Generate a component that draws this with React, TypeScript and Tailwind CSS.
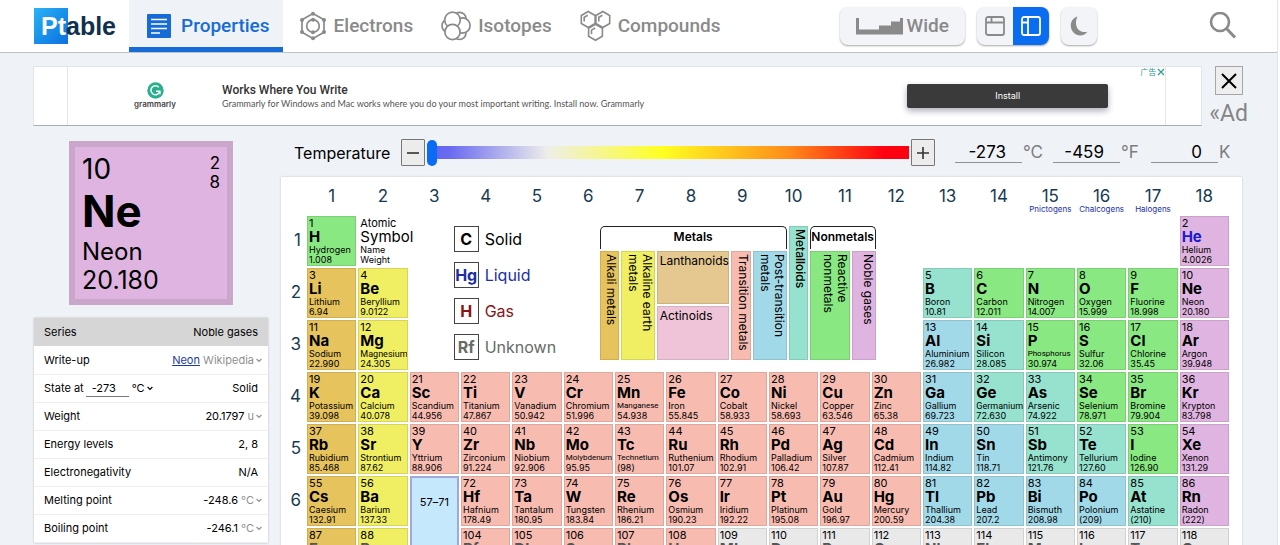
import { Fragment, type ReactNode } from 'react';

type Series = 'alkali' | 'alkaline' | 'transition' | 'post' | 'metalloid' | 'reactive' | 'noble' | 'unknown';

const fill: Record<Series, string> = {
  alkali: 'bg-[#e6c35c]',
  alkaline: 'bg-[#f0ee62]',
  transition: 'bg-[#f8bbb0]',
  post: 'bg-[#a2d9e8]',
  metalloid: 'bg-[#96e2cf]',
  reactive: 'bg-[#89e882]',
  noble: 'bg-[#e0b4e0]',
  unknown: 'bg-[#e9e9e9]',
};

const colStart = [
  '', 'col-start-2', 'col-start-3', 'col-start-4', 'col-start-5', 'col-start-6', 'col-start-7',
  'col-start-8', 'col-start-9', 'col-start-10', 'col-start-11', 'col-start-12', 'col-start-13',
  'col-start-14', 'col-start-15', 'col-start-16', 'col-start-17', 'col-start-18', 'col-start-19',
];

const rowStart = ['', 'row-start-2', 'row-start-3', 'row-start-4', 'row-start-5', 'row-start-6', 'row-start-7', 'row-start-8'];

type Entry = [number, string, string, string, Series];

// One array per period; each run starts at its group and continues rightwards.
const periods: { group: number; items: Entry[] }[][] = [
  [
    { group: 1, items: [[1, 'H', 'Hydrogen', '1.008', 'reactive']] },
    { group: 18, items: [[2, 'He', 'Helium', '4.0026', 'noble']] },
  ],
  [
    { group: 1, items: [[3, 'Li', 'Lithium', '6.94', 'alkali'], [4, 'Be', 'Beryllium', '9.0122', 'alkaline']] },
    {
      group: 13,
      items: [
        [5, 'B', 'Boron', '10.81', 'metalloid'],
        [6, 'C', 'Carbon', '12.011', 'reactive'],
        [7, 'N', 'Nitrogen', '14.007', 'reactive'],
        [8, 'O', 'Oxygen', '15.999', 'reactive'],
        [9, 'F', 'Fluorine', '18.998', 'reactive'],
        [10, 'Ne', 'Neon', '20.180', 'noble'],
      ],
    },
  ],
  [
    { group: 1, items: [[11, 'Na', 'Sodium', '22.990', 'alkali'], [12, 'Mg', 'Magnesium', '24.305', 'alkaline']] },
    {
      group: 13,
      items: [
        [13, 'Al', 'Aluminium', '26.982', 'post'],
        [14, 'Si', 'Silicon', '28.085', 'metalloid'],
        [15, 'P', 'Phosphorus', '30.974', 'reactive'],
        [16, 'S', 'Sulfur', '32.06', 'reactive'],
        [17, 'Cl', 'Chlorine', '35.45', 'reactive'],
        [18, 'Ar', 'Argon', '39.948', 'noble'],
      ],
    },
  ],
  [
    {
      group: 1,
      items: [
        [19, 'K', 'Potassium', '39.098', 'alkali'],
        [20, 'Ca', 'Calcium', '40.078', 'alkaline'],
        [21, 'Sc', 'Scandium', '44.956', 'transition'],
        [22, 'Ti', 'Titanium', '47.867', 'transition'],
        [23, 'V', 'Vanadium', '50.942', 'transition'],
        [24, 'Cr', 'Chromium', '51.996', 'transition'],
        [25, 'Mn', 'Manganese', '54.938', 'transition'],
        [26, 'Fe', 'Iron', '55.845', 'transition'],
        [27, 'Co', 'Cobalt', '58.933', 'transition'],
        [28, 'Ni', 'Nickel', '58.693', 'transition'],
        [29, 'Cu', 'Copper', '63.546', 'transition'],
        [30, 'Zn', 'Zinc', '65.38', 'transition'],
        [31, 'Ga', 'Gallium', '69.723', 'post'],
        [32, 'Ge', 'Germanium', '72.630', 'metalloid'],
        [33, 'As', 'Arsenic', '74.922', 'metalloid'],
        [34, 'Se', 'Selenium', '78.971', 'reactive'],
        [35, 'Br', 'Bromine', '79.904', 'reactive'],
        [36, 'Kr', 'Krypton', '83.798', 'noble'],
      ],
    },
  ],
  [
    {
      group: 1,
      items: [
        [37, 'Rb', 'Rubidium', '85.468', 'alkali'],
        [38, 'Sr', 'Strontium', '87.62', 'alkaline'],
        [39, 'Y', 'Yttrium', '88.906', 'transition'],
        [40, 'Zr', 'Zirconium', '91.224', 'transition'],
        [41, 'Nb', 'Niobium', '92.906', 'transition'],
        [42, 'Mo', 'Molybdenum', '95.95', 'transition'],
        [43, 'Tc', 'Technetium', '(98)', 'transition'],
        [44, 'Ru', 'Ruthenium', '101.07', 'transition'],
        [45, 'Rh', 'Rhodium', '102.91', 'transition'],
        [46, 'Pd', 'Palladium', '106.42', 'transition'],
        [47, 'Ag', 'Silver', '107.87', 'transition'],
        [48, 'Cd', 'Cadmium', '112.41', 'transition'],
        [49, 'In', 'Indium', '114.82', 'post'],
        [50, 'Sn', 'Tin', '118.71', 'post'],
        [51, 'Sb', 'Antimony', '121.76', 'metalloid'],
        [52, 'Te', 'Tellurium', '127.60', 'metalloid'],
        [53, 'I', 'Iodine', '126.90', 'reactive'],
        [54, 'Xe', 'Xenon', '131.29', 'noble'],
      ],
    },
  ],
  [
    { group: 1, items: [[55, 'Cs', 'Caesium', '132.91', 'alkali'], [56, 'Ba', 'Barium', '137.33', 'alkaline']] },
    {
      group: 4,
      items: [
        [72, 'Hf', 'Hafnium', '178.49', 'transition'],
        [73, 'Ta', 'Tantalum', '180.95', 'transition'],
        [74, 'W', 'Tungsten', '183.84', 'transition'],
        [75, 'Re', 'Rhenium', '186.21', 'transition'],
        [76, 'Os', 'Osmium', '190.23', 'transition'],
        [77, 'Ir', 'Iridium', '192.22', 'transition'],
        [78, 'Pt', 'Platinum', '195.08', 'transition'],
        [79, 'Au', 'Gold', '196.97', 'transition'],
        [80, 'Hg', 'Mercury', '200.59', 'transition'],
        [81, 'Tl', 'Thallium', '204.38', 'post'],
        [82, 'Pb', 'Lead', '207.2', 'post'],
        [83, 'Bi', 'Bismuth', '208.98', 'post'],
        [84, 'Po', 'Polonium', '(209)', 'post'],
        [85, 'At', 'Astatine', '(210)', 'metalloid'],
        [86, 'Rn', 'Radon', '(222)', 'noble'],
      ],
    },
  ],
  [
    { group: 1, items: [[87, 'Fr', 'Francium', '(223)', 'alkali'], [88, 'Ra', 'Radium', '(226)', 'alkaline']] },
    {
      group: 4,
      items: [
        [104, 'Rf', 'Rutherfordium', '(267)', 'transition'],
        [105, 'Db', 'Dubnium', '(268)', 'transition'],
        [106, 'Sg', 'Seaborgium', '(269)', 'transition'],
        [107, 'Bh', 'Bohrium', '(270)', 'transition'],
        [108, 'Hs', 'Hassium', '(277)', 'transition'],
        [109, 'Mt', 'Meitnerium', '(278)', 'unknown'],
        [110, 'Ds', 'Darmstadtium', '(281)', 'unknown'],
        [111, 'Rg', 'Roentgenium', '(282)', 'unknown'],
        [112, 'Cn', 'Copernicium', '(285)', 'unknown'],
        [113, 'Nh', 'Nihonium', '(286)', 'unknown'],
        [114, 'Fl', 'Flerovium', '(289)', 'unknown'],
        [115, 'Mc', 'Moscovium', '(290)', 'unknown'],
        [116, 'Lv', 'Livermorium', '(293)', 'unknown'],
        [117, 'Ts', 'Tennessine', '(294)', 'unknown'],
        [118, 'Og', 'Oganesson', '(294)', 'unknown'],
      ],
    },
  ],
];

const groupNames: Record<number, string> = { 15: 'Pnictogens', 16: 'Chalcogens', 17: 'Halogens' };

// Names too wide for a cell in the regular face are set in a narrower one.
const wideNames = new Set(['Magnesium', 'Germanium', 'Meitnerium', 'Moscovium']);
const widestNames = new Set([
  'Phosphorus', 'Manganese', 'Molybdenum', 'Technetium', 'Rutherfordium', 'Seaborgium', 'Darmstadtium',
  'Roentgenium', 'Copernicium', 'Livermorium', 'Tennessine', 'Oganesson',
]);

function nameStyle(name: string) {
  if (widestNames.has(name)) return "text-[8px] font-['Roboto']";
  if (wideNames.has(name)) return "text-[9px] font-['Roboto']";
  return 'text-[9px]';
}

function ElementCell({ entry, group, period }: { entry: Entry; group: number; period: number }) {
  const [number, symbol, name, weight, series] = entry;
  const tone = symbol === 'He' ? 'text-[#1a1ad0]' : period === 7 ? 'text-[#555]' : 'text-black';
  return (
    <a
      href={`#${symbol}`}
      className={`flex min-w-0 flex-col overflow-hidden border border-black/10 pl-px whitespace-nowrap ${fill[series]} ${colStart[group]} ${rowStart[period]}`}
    >
      <span className="text-[11px] leading-[12px]">{number}</span>
      <span className={`text-[15px] leading-[16px] font-bold ${tone}`}>{symbol}</span>
      <span className={`leading-[10px] ${nameStyle(name)}`}>{name}</span>
      <span className="text-[9px] leading-[9px]">{weight}</span>
    </a>
  );
}

function HexPath({ x, y }: { x: number; y: number }) {
  return <path d={`M${x} ${y - 8}l6.9 4v8l-6.9 4l-6.9-4v-8zM${x - 4} ${y + 2}v-4.200l3.600-2.100`} />;
}

function ElectronsIcon() {
  return (
    <svg width="28" height="30" viewBox="0 0 28 30" fill="none" stroke="currentColor" strokeWidth="1.7" aria-hidden="true">
      <path d="M14 2.5L25 8.8v12.4L14 27.5L3 21.2V8.8z" />
      <circle cx="14" cy="15" r="6.3" />
      <g fill="currentColor" stroke="none">
        <circle cx="14" cy="2.8" r="2" />
        <circle cx="25" cy="9" r="2" />
        <circle cx="25" cy="21" r="2" />
        <circle cx="14" cy="27.2" r="2" />
        <circle cx="3" cy="21" r="2" />
        <circle cx="3" cy="9" r="2" />
        <circle cx="14" cy="8.700" r="2" />
        <circle cx="14" cy="21.300" r="2" />
      </g>
    </svg>
  );
}

function IsotopesIcon() {
  return (
    <svg width="30" height="30" viewBox="0 0 30 30" stroke="currentColor" strokeWidth="1.7" fill="white" aria-hidden="true">
      <circle cx="18.5" cy="7.800" r="6.500" />
      <circle cx="18.5" cy="22" r="6.500" />
      <circle cx="8" cy="14.800" r="7" />
      <circle cx="21.500" cy="14.500" r="7.600" />
      <circle cx="11.500" cy="9" r="7.800" />
      <circle cx="11.500" cy="21" r="7.600" />
    </svg>
  );
}

function CompoundsIcon() {
  return (
    <svg width="31" height="32" viewBox="0 0 31 32" fill="none" stroke="currentColor" strokeWidth="1.6" aria-hidden="true">
      <HexPath x={8.2} y={9.5} />
      <HexPath x={22.8} y={9.5} />
      <HexPath x={15.5} y={22.3} />
    </svg>
  );
}

function PropertiesIcon() {
  return (
    <svg width="24" height="24" viewBox="0 0 24 24" aria-hidden="true">
      <rect width="24" height="24" rx="1" fill="currentColor" />
      <path d="M4 5.5h16M4 10h16M4 14.500h16M4 19h9" stroke="white" strokeWidth="1.4" />
    </svg>
  );
}

function Tab({ icon, label, active = false }: { icon: ReactNode; label: string; active?: boolean }) {
  return (
    <a
      href={`#${label}`}
      className={`flex items-center border-b-[5px] pt-[5px] font-['Roboto'] text-[19px] font-medium ${
        active ? 'gap-[10px] border-[#176bd6] bg-[#eff3f8] pr-[13px] pl-[18px] text-[#176bd6]' : 'gap-[7px] border-transparent text-[#8a8a8a]'
      }`}
    >
      {icon}
      <span>{label}</span>
    </a>
  );
}

function Header() {
  return (
    <header className="flex h-[53px] shrink-0 items-stretch border-b border-[#bcc2c8] bg-white pr-10 pl-[34px]">
      <a href="#home" className="my-[7px] mr-[13px] flex items-center font-['Liberation_Sans'] text-[25px] leading-none font-bold">
        <span className="flex h-9 items-center bg-linear-to-br from-[#2bb2f4] to-[#0f6fe0] pr-0.5 pl-[7px] text-white">Pt</span>
        <span className="-ml-0.5 text-[#10304d]">able</span>
      </a>
      <nav className="flex items-stretch gap-7">
        <div className="-mr-3 flex">
          <Tab active icon={<PropertiesIcon />} label="Properties" />
        </div>
        <Tab icon={<ElectronsIcon />} label="Electrons" />
        <Tab icon={<IsotopesIcon />} label="Isotopes" />
        <Tab icon={<CompoundsIcon />} label="Compounds" />
      </nav>
      <div className="my-[7px] mr-28 ml-auto flex items-stretch gap-3 text-[#8a8a8a]">
        <button className="flex items-center gap-1 rounded-lg bg-[#f2f4f8] px-4 font-['Roboto'] text-[19px] font-medium shadow-[0_1px_2px_rgba(0,0,0,0.35)]">
          <svg width="47" height="17" viewBox="0 0 47 17" fill="currentColor" aria-hidden="true">
            <path d="M0 0h3v11.500h20v-4h12v-4h9V0h3v16.500H0z" />
          </svg>
          Wide
        </button>
        <div className="flex overflow-hidden rounded-lg bg-[#f2f4f8] shadow-[0_1px_2px_rgba(0,0,0,0.35)]">
          <button aria-label="Top panel" className="flex w-9 items-center justify-center">
            <svg width="20" height="20" viewBox="0 0 20 20" fill="none" stroke="currentColor" strokeWidth="1.8" aria-hidden="true">
              <rect x="1" y="1" width="18" height="18" rx="2" />
              <path d="M1 6.500h18M6.500 1v5.500" />
            </svg>
          </button>
          <button aria-label="Side panel" className="flex w-9 items-center justify-center bg-[#0a6cf0] text-white">
            <svg width="20" height="20" viewBox="0 0 20 20" fill="none" stroke="currentColor" strokeWidth="1.8" aria-hidden="true">
              <rect x="1" y="1" width="18" height="18" rx="2" />
              <path d="M7 1v18M1 6.500h6" />
            </svg>
          </button>
        </div>
        <button aria-label="Dark mode" className="flex w-9 items-center justify-center rounded-lg bg-[#f2f4f8] shadow-[0_1px_2px_rgba(0,0,0,0.35)]">
          <svg width="18" height="20" viewBox="0 0 18 20" fill="currentColor" aria-hidden="true">
            <path d="M7.500 0.500C3.500 1.500 0.800 5.200 0.800 9.500c0 5.600 4.200 10 9.400 10c3 0 5.600-1.400 7.200-3.700C11 17.200 6.200 13.200 6 7.500C5.900 4.800 6.500 2.300 7.500 0.500z" />
          </svg>
        </button>
      </div>
      <button aria-label="Search" className="text-[#8a8a8a]">
        <svg width="28" height="28" viewBox="0 0 28 28" fill="none" stroke="currentColor" strokeWidth="2.6" aria-hidden="true">
          <circle cx="11" cy="10" r="9" />
          <path d="M17.500 16.500L26 25.500" strokeWidth="3" />
        </svg>
      </button>
    </header>
  );
}

function Advert() {
  return (
    <div className="mt-[13px] mr-[29px] ml-[33px] flex gap-[7px]">
      <div className="flex h-[60px] min-w-0 flex-1 border border-[#e2e5e8] border-b-[#a9adb2] bg-white pr-[35px] pl-[33px]">
        <div className="flex flex-1 border-x border-[#e6e6e6]">
          <div className="flex w-[154px] shrink-0 flex-col items-center justify-center pl-5">
            <svg width="17" height="17" viewBox="0 0 17 17" aria-hidden="true">
              <circle cx="8.500" cy="8.500" r="8.200" fill="#27b08b" />
              <path d="M11.800 5.200A4.500 4.500 0 1 0 12.600 10M9 9.300h3.900v3" fill="none" stroke="white" strokeWidth="1.500" />
            </svg>
            <span className="text-[8px] leading-[11px] font-semibold text-[#444]">grammarly</span>
          </div>
          <div className="flex flex-col justify-center">
            <strong className="font-['Roboto'] text-[12px] leading-[16px] font-medium text-[#333]">Works Where You Write</strong>
            <span className="font-['Lato'] text-[9px] leading-[12px] whitespace-nowrap text-[#555]">
              Grammarly for Windows and Mac works where you do your most important writing. Install now. Grammarly
            </span>
          </div>
          <div className="ml-auto flex items-start">
            <button className="mt-[17px] mr-8 h-6 w-[201px] rounded-[2px] bg-[#3a3a3a] text-[9px] text-white shadow-[0_3px_6px_rgba(60,50,90,0.4)]">
              Install
            </button>
            <div className="flex items-center font-['Noto_Sans_CJK_SC',sans-serif] text-[8px] leading-[10px] text-[#2f9c98]">
              广告
              <svg width="9" height="8" viewBox="0 0 9 8" stroke="currentColor" strokeWidth="1.200" aria-hidden="true">
                <path d="M2 1l6 6M8 1L2 7" />
              </svg>
            </div>
          </div>
        </div>
      </div>
      <div className="flex flex-col items-center">
        <button aria-label="Close advert" className="flex h-[29px] w-7 items-center justify-center border border-[#a6a6a6] bg-[#eee] text-black">
          <svg width="16" height="16" viewBox="0 0 16 16" stroke="currentColor" strokeWidth="2" aria-hidden="true">
            <path d="M1 1l14 14M15 1L1 15" />
          </svg>
        </button>
        <a href="#ad" className="mt-[5px] font-['Roboto'] text-[23px] leading-[28px] text-[#858585]">«Ad</a>
      </div>
    </div>
  );
}

function Chevron() {
  return (
    <svg className="ml-0.5 inline-block" width="6" height="5" viewBox="0 0 6 5" fill="none" stroke="currentColor" strokeWidth="1.200" aria-hidden="true">
      <path d="M0.600 1l2.400 2.400L5.400 1" />
    </svg>
  );
}

function PropertyRow({ label, unit, children }: { label: ReactNode; unit?: string; children: ReactNode }) {
  return (
    <tr className="h-7 border-b border-[#efefef]">
      <th scope="row" className="pl-[10px] text-left font-normal">{label}</th>
      <td className={`text-right ${unit ? 'pr-[6px]' : 'pr-[10px]'}`}>
        {children}
        {unit && <span className="text-[#8f8f8f]"> {unit}<Chevron /></span>}
      </td>
    </tr>
  );
}

function Sidebar() {
  return (
    <aside className="w-[234px] shrink-0">
      <div className="mx-auto flex h-[164px] w-[164px] justify-between border-[6px] border-[#caa6ca] bg-[#e0b4e0] px-[7px] pt-[7px]">
        <div className="flex flex-col">
          <span className="text-[28px] leading-[30px]">10</span>
          <span className="text-[44px] leading-[54px] font-bold">Ne</span>
          <span className="text-[24px] leading-[28px]">Neon</span>
          <span className="text-[25px] leading-[29px]">20.180</span>
        </div>
        <div className="flex flex-col items-end text-[17px] leading-[19px]">
          <span>2</span>
          <span>8</span>
        </div>
      </div>
      <table className="mt-[13px] w-full border-collapse bg-white text-[11px] shadow-[0_0_2px_rgba(0,0,0,0.25)]">
        <thead>
          <tr className="h-7 bg-[#d6d6d6]">
            <th scope="col" className="pl-[10px] text-left font-normal">Series</th>
            <th scope="col" className="pr-[10px] text-right font-normal">Noble gases</th>
          </tr>
        </thead>
        <tbody>
          <PropertyRow label="Write-up" unit="Wikipedia">
            <a href="#neon" className="text-[#1a3a9c] underline">Neon</a>
          </PropertyRow>
          <PropertyRow
            label={
              <span className="flex items-center">
                <label htmlFor="state-temp">State at</label>
                <input id="state-temp" defaultValue="-273" className="ml-0.5 w-[43px] border-b border-[#777] bg-transparent px-[6px] leading-[16px]" />
                <select aria-label="Temperature unit" className="ml-[3px] appearance-none bg-transparent">
                  <option>°C</option>
                </select>
                <Chevron />
              </span>
            }
          >
            Solid
          </PropertyRow>
          <PropertyRow label="Weight" unit="u">20.1797</PropertyRow>
          <PropertyRow label="Energy levels">2, 8</PropertyRow>
          <PropertyRow label="Electronegativity">N/A</PropertyRow>
          <PropertyRow label="Melting point" unit="°C">-248.6</PropertyRow>
          <PropertyRow label="Boiling point" unit="°C">-246.1</PropertyRow>
        </tbody>
      </table>
    </aside>
  );
}

function TemperatureField({ id, value, unit }: { id: string; value: string; unit: string }) {
  return (
    <div className="flex w-[86px] items-center">
      <input id={id} defaultValue={value} className="w-[67px] border-b border-[#8d9298] bg-transparent pr-4 text-right leading-[20px]" />
      <label htmlFor={id} className="pl-px text-[#7d7d7d]">{unit}</label>
    </div>
  );
}

function TemperatureBar() {
  return (
    <div className="flex items-center pr-[5px] pl-[13px] text-[17px]">
      <label htmlFor="temperature" className="w-[107px] text-[16px]">Temperature</label>
      <button aria-label="Colder" className="flex h-[27px] w-6 items-center justify-center rounded-[1px] border border-[#777] bg-[#ececec]">
        <svg width="12" height="12" viewBox="0 0 12 12" stroke="#333" strokeWidth="1.600" aria-hidden="true">
          <path d="M0 6h12" />
        </svg>
      </button>
      <input
        id="temperature"
        type="range"
        min="0"
        max="6000"
        defaultValue="0"
        className="mx-0.5 h-[13px] min-w-0 flex-1 appearance-none bg-[linear-gradient(to_right,#6060f0_0%,#6c6cf0_5%,#eeeeea_25%,#ffff20_49%,#ff8c1a_75%,#ff0010_95%)] [&::-webkit-slider-thumb]:h-[26px] [&::-webkit-slider-thumb]:w-[10px] [&::-webkit-slider-thumb]:appearance-none [&::-webkit-slider-thumb]:rounded-[5px] [&::-webkit-slider-thumb]:bg-[#0a6cf5]"
      />
      <button aria-label="Hotter" className="mr-5 flex h-[27px] w-6 items-center justify-center rounded-[1px] border border-[#777] bg-[#ececec]">
        <svg width="12" height="12" viewBox="0 0 12 12" stroke="#333" strokeWidth="1.600" aria-hidden="true">
          <path d="M0 6h12M6 0v12" />
        </svg>
      </button>
      <div className="flex gap-3">
        <TemperatureField id="celsius" value="-273" unit="°C" />
        <TemperatureField id="fahrenheit" value="-459" unit="°F" />
        <TemperatureField id="kelvin" value="0" unit="K" />
      </div>
    </div>
  );
}

function StateKey({ symbol, label, tone }: { symbol: string; label: string; tone: string }) {
  return (
    <div className={`flex items-center gap-[6px] ${tone}`}>
      <span className="flex h-[26px] w-[25px] items-center justify-center border border-[#444] text-[16px] font-bold">{symbol}</span>
      <span className="text-[16px]">{label}</span>
    </div>
  );
}

const vertical = '[writing-mode:vertical-rl] row-span-2 flex items-start justify-start pt-0.5';

function Legend() {
  return (
    <div className="col-span-10 col-start-4 row-span-3 row-start-2 flex items-start pt-[10px] pl-11">
      <div className="flex w-[146px] flex-col gap-[10px]">
        <StateKey symbol="C" label="Solid" tone="text-black" />
        <StateKey symbol="Hg" label="Liquid" tone="text-[#1c2fa8]" />
        <StateKey symbol="H" label="Gas" tone="text-[#8a1414]" />
        <StateKey symbol="Rf" label="Unknown" tone="text-[#666b66]" />
      </div>
      <div className="grid grid-cols-[19px_34px_72px_20px_34px_19px_40px_24px] grid-rows-[23px_53px_54px] gap-0.5 text-[12px] leading-[14px]">
        <div className="col-span-5 flex items-center justify-center rounded-t-[5px] border border-b-0 border-[#222] pb-0.5 font-semibold">Metals</div>
        <div className="row-span-3 border border-black/10 bg-[#96e2cf] pt-0.5 font-medium [writing-mode:vertical-rl]">Metalloids</div>
        <div className="col-span-2 flex items-center justify-center rounded-t-[5px] border border-b-0 border-[#222] pb-0.5 font-semibold">Nonmetals</div>
        <div className={`${vertical} border border-black/10 bg-[#e6c35c]`}>Alkali metals</div>
        <div className={`${vertical} border border-black/10 bg-[#f0ee62]`}>Alkaline earth metals</div>
        <div className="border border-black/10 bg-[#e5c88f] pt-0.5 pl-0.5">Lanthanoids</div>
        <div className={`${vertical} border border-black/10 bg-[#f8bbb0]`}>Transition metals</div>
        <div className={`${vertical} border border-black/10 bg-[#a2d9e8]`}>Post-transition metals</div>
        <div className={`${vertical} border border-black/10 bg-[#89e882]`}>Reactive nonmetals</div>
        <div className={`${vertical} border border-black/10 bg-[#e0b4e0]`}>Noble gases</div>
        <div className="col-start-3 row-start-3 border border-black/10 bg-[#f0c4d8] pt-0.5 pl-0.5">Actinoids</div>
      </div>
    </div>
  );
}

function PeriodicTable() {
  return (
    <div className="mt-[11px] grid grid-cols-[24px_repeat(18,minmax(0,1fr))] grid-rows-[37px_repeat(7,50px)] gap-0.5 bg-white pr-[13px] shadow-[0_0_2px_rgba(0,0,0,0.2)]">
      {Array.from({ length: 18 }, (_, i) => i + 1).map((group) => (
        <div key={group} className={`row-start-1 flex flex-col items-center pt-[9px] text-[#173a52] ${colStart[group]}`}>
          <span className="text-[17px] leading-[21px]">{group}</span>
          {groupNames[group] && (
            <a href={`#${groupNames[group]}`} className="text-[8px] leading-[5px] whitespace-nowrap text-[#1c2fa8]">{groupNames[group]}</a>
          )}
        </div>
      ))}
      {periods.map((runs, index) => (
        <Fragment key={index}>
          <div className={`col-start-1 flex items-center justify-end pr-1 text-[17px] text-[#173a52] ${rowStart[index + 1]}`}>
            {index + 1}
          </div>
          {runs.map((run) =>
            run.items.map((entry, offset) => (
              <ElementCell key={entry[0]} entry={entry} group={run.group + offset} period={index + 1} />
            )),
          )}
        </Fragment>
      ))}
      <div className="col-start-3 row-start-2 flex flex-col pt-px pl-0.5 whitespace-nowrap">
        <span className="text-[11px] leading-[12px]">Atomic</span>
        <span className="text-[15px] leading-[16px]">Symbol</span>
        <span className="text-[9px] leading-[10px]">Name</span>
        <span className="text-[9px] leading-[9px]">Weight</span>
      </div>
      <Legend />
      <a href="#lanthanoids" className="col-start-4 row-span-2 row-start-7 border-2 border-[#a3a8da] bg-[#c5e8fd] pt-4 text-center text-[11px]">
        57–71
      </a>
    </div>
  );
}

export default function App() {
  return (
    <div className="h-screen overflow-hidden bg-white pr-0.5 font-['Inter',sans-serif] text-black">
      <div className="flex h-full flex-col border-r border-[#dfe4ea] bg-[#eff3f8]">
        <Header />
        <Advert />
        <main className="mt-[11px] flex items-start pr-[35px] pl-[34px]">
          <div className="pt-0.5">
            <Sidebar />
          </div>
          <section className="ml-[13px] min-w-0 flex-1">
            <TemperatureBar />
            <PeriodicTable />
          </section>
        </main>
      </div>
    </div>
  );
}
